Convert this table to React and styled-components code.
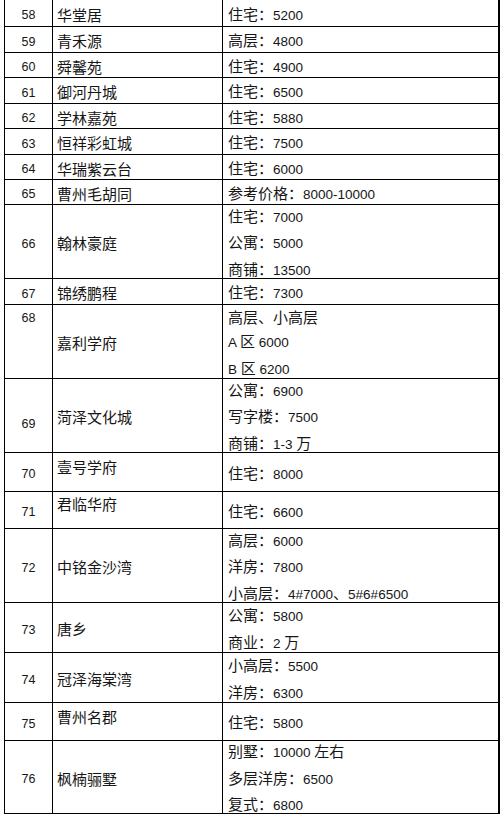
import React from 'react';
import styled, { createGlobalStyle } from 'styled-components';

const rows = [
	{ no: '58', name: '华堂居', h: 27, vals: ['住宅：5200'] },
	{ no: '59', name: '青禾源', h: 26, vals: ['高层：4800'] },
	{ no: '60', name: '舜馨苑', h: 25, vals: ['住宅：4900'] },
	{ no: '61', name: '御河丹城', h: 26, vals: ['住宅：6500'] },
	{ no: '62', name: '学林嘉苑', h: 25, vals: ['住宅：5880'] },
	{ no: '63', name: '恒祥彩虹城', h: 26, vals: ['住宅：7500'] },
	{ no: '64', name: '华瑞紫云台', h: 25, vals: ['住宅：6000'] },
	{ no: '65', name: '曹州毛胡同', h: 25, vals: ['参考价格：8000-10000'] },
	{ no: '66', name: '翰林豪庭', h: 74, vals: ['住宅：7000', '公寓：5000', '商铺：13500'] },
	{ no: '67', name: '锦绣鹏程', h: 26, vals: ['住宅：7300'] },
	{ no: '68', name: '嘉利学府', h: 74, noTop: true, vals: ['高层、小高层', 'A 区 6000', 'B 区 6200'] },
	{ no: '69', name: '菏泽文化城', h: 74, noPad: 18, vals: ['公寓：6900', '写字楼：7500', '商铺：1-3 万'] },
	{ no: '70', name: '壹号学府', h: 39, nameTop: 2, vals: ['住宅：8000'] },
	{ no: '71', name: '君临华府', h: 37, nameTop: 0, vals: ['住宅：6600'] },
	{ no: '72', name: '中铭金沙湾', h: 74, vals: ['高层：6000', '洋房：7800', '小高层：4#7000、5#6#6500'] },
	{ no: '73', name: '唐乡', h: 50, vals: ['公寓：5800', '商业：2 万'] },
	{ no: '74', name: '冠泽海棠湾', h: 50, vals: ['小高层：5500', '洋房：6300'] },
	{ no: '75', name: '曹州名郡', h: 38, nameTop: 2, vals: ['住宅：5800'] },
	{ no: '76', name: '枫楠骊墅', h: 73, vals: ['别墅：10000 左右', '多层洋房：6500', '复式：6800'] },
];

// ascii runs get a narrower latin face so digits sit at half width
const renderText = (s) =>
	s.split(/([ -~]+)/).map((part, i) =>
		/^[ -~]+$/.test(part) ? <Latin key={i}>{part}</Latin> : part
	);

const App = () => {
	return (
		<>
			<GlobalStyle />
			<Table>
				{rows.map((r) => (
					<Row key={r.no} $h={r.h}>
						<NoCell
							$top={r.noTop}
							$pt={r.noTop ? 1 : r.noPad !== undefined ? r.noPad : 5}
						>
							<Line>{r.no}</Line>
						</NoCell>
						<NameCell
							$top={r.nameTop !== undefined}
							$pt={r.nameTop !== undefined ? r.nameTop : 4}
						>
							<Line>{r.name}</Line>
						</NameCell>
						<ValueCell $pt={4}>
							{r.vals.map((v, i) => (
								<Line key={i}>{renderText(v)}</Line>
							))}
						</ValueCell>
					</Row>
				))}
			</Table>
		</>
	);
};

export default App;

const GlobalStyle = createGlobalStyle`
	html, body {
		margin: 0;
		padding: 0;
		background: #fff;
	}
	body {
		font-family: "Noto Sans CJK SC", "Liberation Sans", sans-serif;
		color: #161616;
		overflow: hidden;
	}
`;

const Table = styled.div`
	width: 496px;
	margin: -1px 0 0 4px;
	box-sizing: border-box;
	border-top: 1px solid #000;
	border-left: 1px solid #000;
	border-right: 2px solid #000;
`;

const Row = styled.div`
	display: grid;
	grid-template-columns: 48px 170px 1fr;
	height: ${(p) => p.$h}px;
	box-sizing: border-box;
	border-bottom: 1px solid #000;
`;

const Cell = styled.div`
	display: flex;
	flex-direction: column;
	justify-content: ${(p) => (p.$top ? 'flex-start' : 'center')};
	padding-top: ${(p) => p.$pt}px;
	box-sizing: border-box;
	min-height: 0;
	overflow: visible;
	border-right: 1px solid #000;
	font-size: 15px;
`;

const NoCell = styled(Cell)`
	align-items: center;
	font-family: "Liberation Sans", sans-serif;
	font-size: 12.5px;
`;

const NameCell = styled(Cell)`
	padding-left: 4px;
`;

const ValueCell = styled(Cell)`
	padding-left: 5px;
	border-right: none;
`;

const Line = styled.div`
	line-height: 24.4px;
	flex-shrink: 0;
	white-space: nowrap;
`;

const Latin = styled.span`
	font-family: "Liberation Sans", sans-serif;
	font-size: 13.5px;
`;
